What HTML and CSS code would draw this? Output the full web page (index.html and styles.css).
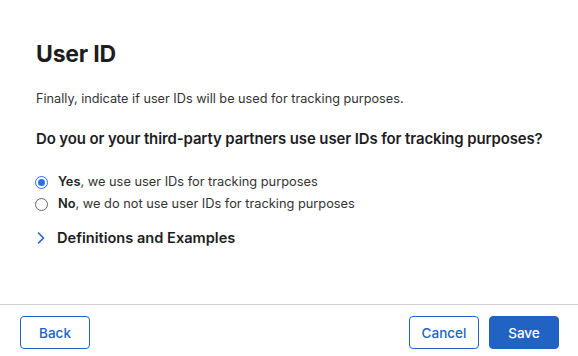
FILE: index.html
```html
<!DOCTYPE html>
<html>
<head>
<meta charset="utf-8">
<link rel="stylesheet" href="styles.css">
</head>
<body>
<div class="modal">
  <div class="content">
    <h1 class="title">User ID</h1>
    <p class="desc">Finally, indicate if user IDs will be used for tracking purposes.</p>
    <p class="question">Do you or your third-party partners use user IDs for tracking purposes?</p>
    <div class="options">
      <label class="option"><span class="radio checked"></span><span><b>Yes</b>, we use user IDs for tracking purposes</span></label>
      <label class="option"><span class="radio"></span><span><b>No</b>, we do not use user IDs for tracking purposes</span></label>
    </div>
    <div class="defs">
      <svg class="chev" width="8" height="12" viewBox="0 0 8 12"><path d="M1.5 1 L6.5 6 L1.5 11" fill="none" stroke="#2163c2" stroke-width="1.6" stroke-linecap="round" stroke-linejoin="round"/></svg>
      <span>Definitions and Examples</span>
    </div>
  </div>
  <div class="footer">
    <button class="btn outline">Back</button>
    <div class="right">
      <button class="btn outline">Cancel</button>
      <button class="btn primary">Save</button>
    </div>
  </div>
</div>
</body>
</html>
```
FILE: styles.css
```css
html, body { margin: 0; padding: 0; background: #fff; }
body { font-family: Inter, "Noto Sans", sans-serif; color: #1d1d1f; }
.modal { width: 578px; height: 356px; display: flex; flex-direction: column; box-sizing: border-box; }
.content { flex: 1; padding: 40px 16px 0 36px; }
.title { margin: 0; font-size: 23px; font-weight: 700; line-height: 28px; letter-spacing: -0.2px; }
.desc { margin: 23px 0 0; font-size: 12.7px; line-height: 16px; color: #333; }
.question { margin: 22px 0 0; font-size: 14.95px; font-weight: 600; line-height: 20px; letter-spacing: -0.1px; white-space: nowrap; }
.options { margin-top: 25px; display: flex; flex-direction: column; gap: 6px; }
.option { display: flex; align-items: center; font-size: 12.8px; line-height: 16px; color: #333; }
.option b { font-weight: 600; color: #222; }
.radio { width: 11px; height: 11px; border: 1px solid #666; border-radius: 50%; box-sizing: content-box; margin: 0 10px 0 -1px; position: relative; }
.radio.checked { border-color: #2d6fe6; }
.radio.checked::after { content: ""; position: absolute; left: 2px; top: 2px; width: 7px; height: 7px; border-radius: 50%; background: #2d6fe6; }
.defs { margin-top: 16px; display: flex; align-items: center; font-size: 14.6px; font-weight: 600; line-height: 20px; }
.chev { margin: 0 12px 0 1px; }
.footer { border-top: 1px solid #d2d2d2; height: 52px; display: flex; justify-content: space-between; align-items: flex-start; padding: 11px 19px 0 20px; box-sizing: border-box; }
.right { display: flex; gap: 10px; }
.btn { width: 70px; height: 33px; border-radius: 4px; font-family: Inter, "Noto Sans", sans-serif; font-size: 13.5px; font-weight: 500; cursor: pointer; }
.outline { background: #fff; border: 1px solid #2163c2; color: #2163c2; }
.primary { background: #2163c2; border: 1px solid #2163c2; color: #fff; }
```
